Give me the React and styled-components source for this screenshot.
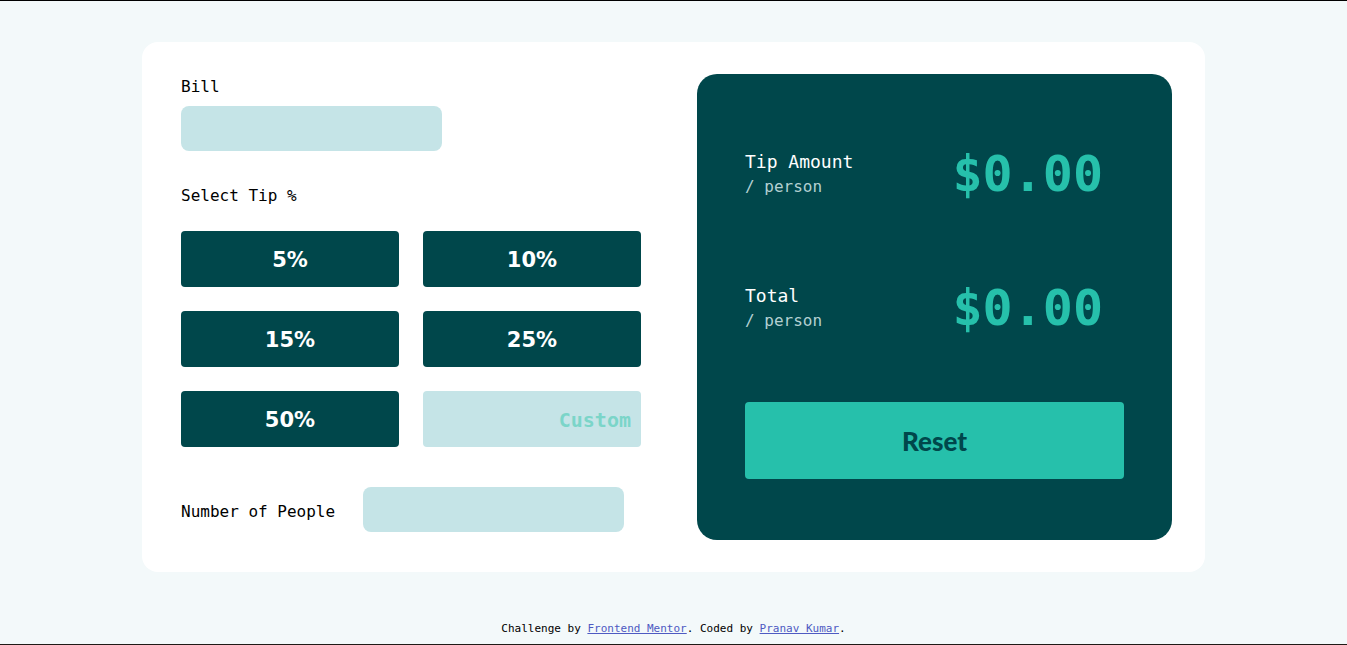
import React from 'react';
import styled, { createGlobalStyle } from 'styled-components';

const GlobalStyle = createGlobalStyle`
    * {
        box-sizing: border-box;
    }
    body {
        margin: 0;
        background-color: #f3f9fa;
        font-family: "DejaVu Sans Mono", "Liberation Mono", monospace;
    }
`;

const Page = styled.div`
    min-height: 645px;
    border-top: 1px solid #000;
    border-bottom: 1px solid #1f1a16;
    display: flex;
    flex-direction: column;
    align-items: center;
    padding-top: 41px;
`;

const Card = styled.main`
    width: 1063px;
    height: 530px;
    background-color: white;
    border-radius: 16px;
    display: flex;
    padding: 32px 33px 32px 39px;
`;

const LeftColumn = styled.section`
    width: 460px;
    display: flex;
    flex-direction: column;
`;

const Label = styled.label`
    display: block;
    font-size: 16px;
    line-height: 24px;
    padding-top: 1px;
    color: #000;
    margin-top: ${props => props.top || 0}px;
`;

const Field = styled.input`
    display: block;
    width: 261px;
    height: 45px;
    border: none;
    border-radius: 8px;
    background-color: #c5e4e7;
    outline: none;
    margin-top: ${props => props.top || 0}px;
`;

const TipGrid = styled.div`
    display: grid;
    grid-template-columns: 218px 218px;
    grid-auto-rows: 56px;
    gap: 24px;
    margin-top: 23px;
`;

const TipButton = styled.button`
    border: none;
    border-radius: 4px;
    background-color: #00474b;
    color: white;
    font-family: "DejaVu Sans", Verdana, sans-serif;
    font-weight: bold;
    font-size: 21px;
    padding-top: 2px;
`;

const CustomButton = styled.button`
    border: none;
    border-radius: 4px;
    background-color: #c5e4e7;
    color: #7bd5c9;
    font-family: "DejaVu Sans Mono", monospace;
    font-weight: bold;
    font-size: 20px;
    text-align: right;
    padding: 2px 10px 0 0;
`;

const PeopleRow = styled.div`
    display: flex;
    align-items: center;
    gap: 28px;
    margin-top: 40px;

    ${Label} {
        padding-top: 4px;
    }
`;

const ResultPanel = styled.section`
    margin-left: auto;
    width: 475px;
    background-color: #00474b;
    border-radius: 20px;
    padding: 75px 48px 61px;
    display: flex;
    flex-direction: column;
`;

const ResultRow = styled.div`
    display: flex;
    align-items: center;
    justify-content: space-between;
    padding-right: 21px;
    margin-top: ${props => props.top || 0}px;
`;

const ResultTitle = styled.div`
    color: white;
    font-size: 18px;
    line-height: 24px;
`;

const PerPerson = styled.div`
    color: #b3d0d2;
    font-size: 16px;
    line-height: 24px;
    padding-top: 1px;
`;

const Amount = styled.div`
    color: #26c0ab;
    font-size: 50px;
    font-weight: bold;
    line-height: 1;
`;

const ResetButton = styled.button`
    margin-top: auto;
    height: 77px;
    border: none;
    border-radius: 4px;
    background-color: #26c0ab;
    color: #00474b;
    font-family: Lato, "Liberation Sans", sans-serif;
    font-weight: 900;
    font-size: 26px;
`;

const Footer = styled.footer`
    margin-top: 49px;
    font-size: 11px;
    line-height: 16px;
    color: #000;

    a {
        color: #4e5ac2;
    }
`;

function App () {
    return (
        <>
            <GlobalStyle />
            <Page>
                <Card>
                    <LeftColumn>
                        <Label>Bill</Label>
                        <Field top={7} />
                        <Label top={32}>Select Tip %</Label>
                        <TipGrid>
                            <TipButton>5%</TipButton>
                            <TipButton>10%</TipButton>
                            <TipButton>15%</TipButton>
                            <TipButton>25%</TipButton>
                            <TipButton>50%</TipButton>
                            <CustomButton>Custom</CustomButton>
                        </TipGrid>
                        <PeopleRow>
                            <Label>Number of People</Label>
                            <Field />
                        </PeopleRow>
                    </LeftColumn>
                    <ResultPanel>
                        <ResultRow>
                            <div>
                                <ResultTitle>Tip Amount</ResultTitle>
                                <PerPerson>/ person</PerPerson>
                            </div>
                            <Amount>$0.00</Amount>
                        </ResultRow>
                        <ResultRow top={84}>
                            <div>
                                <ResultTitle>Total</ResultTitle>
                                <PerPerson>/ person</PerPerson>
                            </div>
                            <Amount>$0.00</Amount>
                        </ResultRow>
                        <ResetButton>Reset</ResetButton>
                    </ResultPanel>
                </Card>
                <Footer>
                    Challenge by <a href="#">Frontend Mentor</a>. Coded by <a href="#">Pranav Kumar</a>.
                </Footer>
            </Page>
        </>
    )
}

export default App
